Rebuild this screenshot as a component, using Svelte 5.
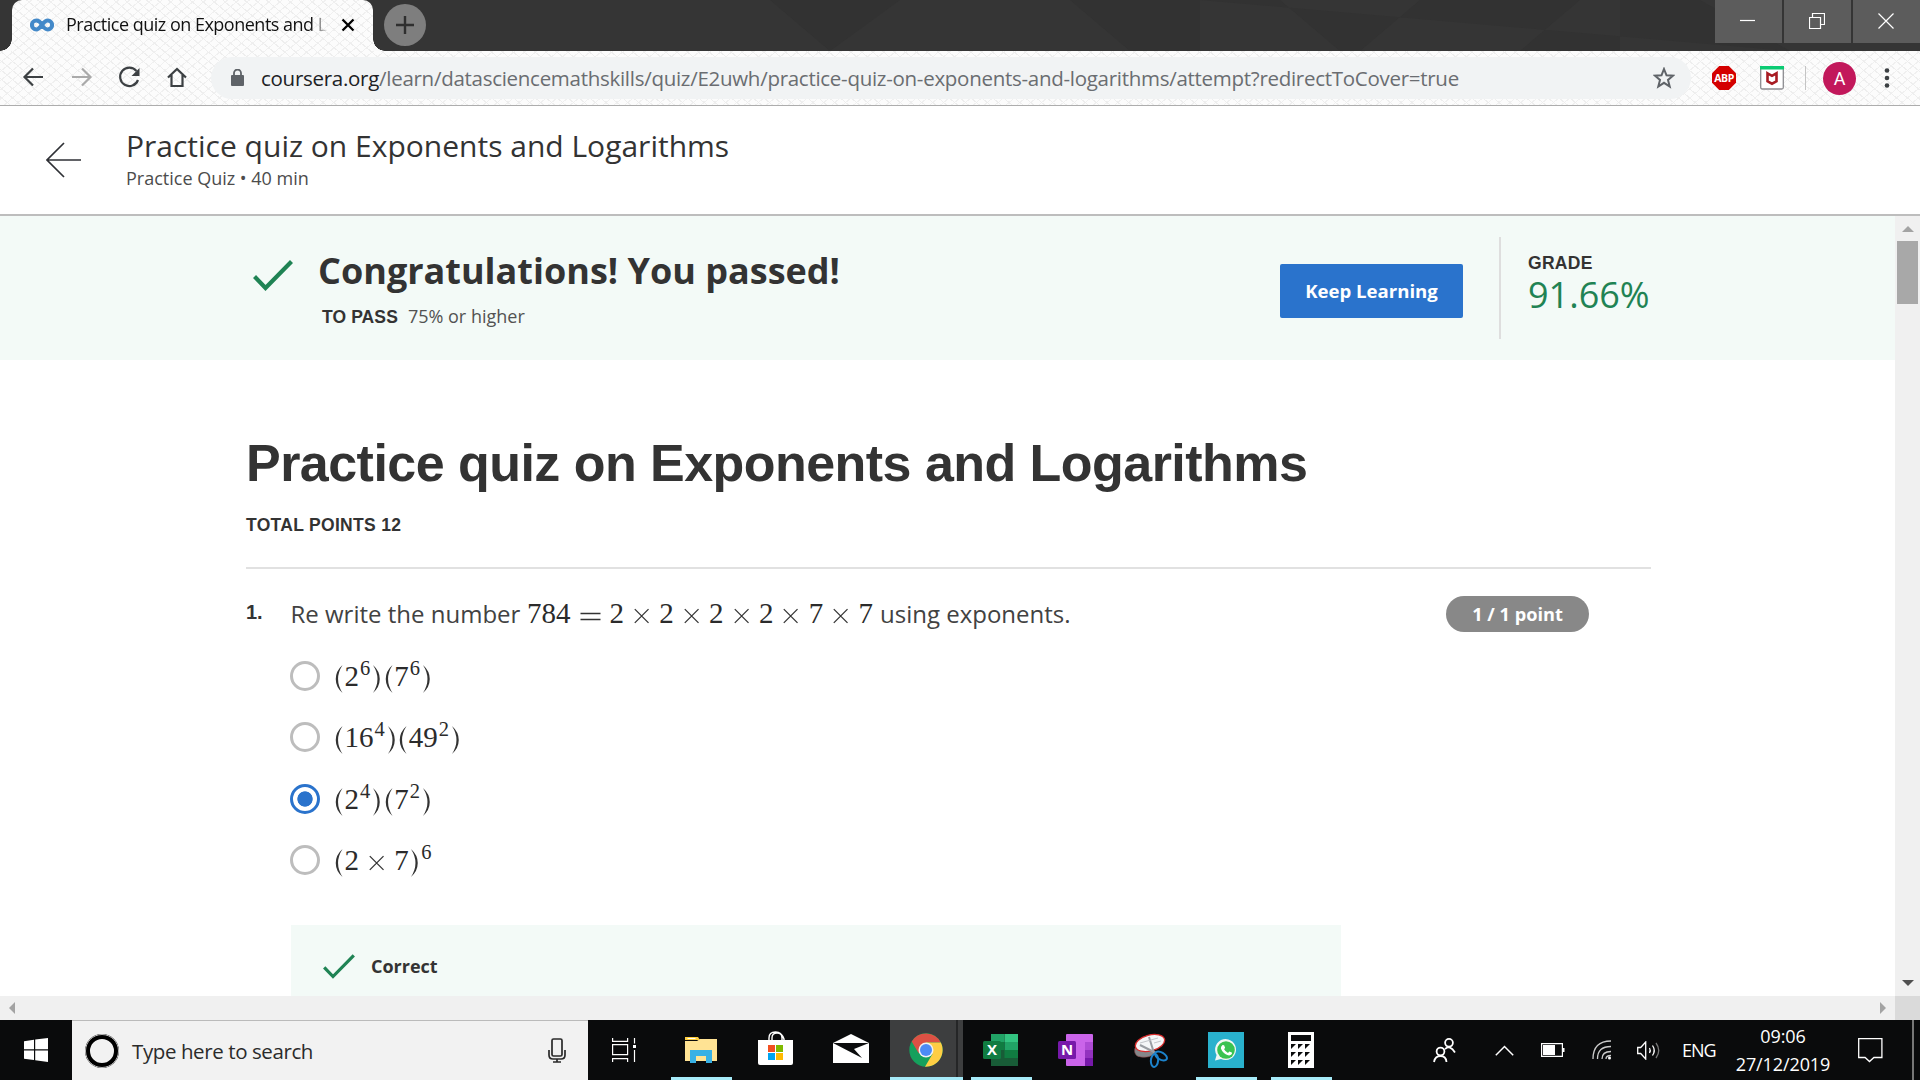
<script>
  const options = [
    { parts: [['(', 'p'], ['2'], ['6', 's'], [')', 'p'], ['(', 'p'], ['7'], ['6', 's'], [')', 'p']], checked: false },
    { parts: [['(', 'p'], ['1'], ['6'], ['4', 's'], [')', 'p'], ['(', 'p'], ['4'], ['9'], ['2', 's'], [')', 'p']], checked: false },
    { parts: [['(', 'p'], ['2'], ['4', 's'], [')', 'p'], ['(', 'p'], ['7'], ['2', 's'], [')', 'p']], checked: true },
    { parts: [['(', 'p'], ['2'], ['×', 'o'], ['7'], [')', 'p'], ['6', 's']], checked: false },
  ];
  const equation = [['7'], ['8'], ['4'], ['=', 'e'], ['2'], ['×', 'o'], ['2'], ['×', 'o'], ['2'], ['×', 'o'], ['2'], ['×', 'o'], ['7'], ['×', 'o'], ['7']];
</script>

{#snippet math(parts)}
  <span class="math">{#each parts as [ch, kind]}{#if kind === 'o'}<svg class="op times" viewBox="0 0 36 20"><path d="M11 3l14 14M25 3L11 17" /></svg>{:else if kind === 'e'}<svg class="op equals" viewBox="0 0 39 20"><path d="M9.500 7.500h20M9.500 13.500h20" /></svg>{:else if kind === 'p'}<svg class="paren" class:close={ch === ')'} viewBox="0 0 11 30"><path d="M9.300 1Q2.500 7 2.500 15T9.300 29Q4.800 22 4.800 15T9.300 1Z" /></svg>{:else}<span class="digit" class:sup={kind === 's'}>{ch}</span>{/if}{/each}</span>
{/snippet}

<div class="screen">
  <div class="tabstrip">
    <svg class="facets" width="1920" height="51"><path d="M770 0h130l-70 51zM1070 0l60 51h70V0zM1200 0h80l60 51h20l60-51h160l-60 51h100V0h80l90 51" fill="#323232" /></svg>
    <div class="tab">
      <svg width="24" height="14" viewBox="0 0 24 14"><path d="M12 7C10 3.500 8 2.600 6.300 2.600a4.400 4.400 0 0 0 0 8.800C10.500 11.400 13 2.600 17.700 2.600a4.400 4.400 0 0 1 0 8.800C15.500 11.400 14 10 12 7" fill="none" stroke="#4389c9" stroke-width="4" /></svg>
      <span class="tab-title">Practice quiz on Exponents and L</span>
      <svg class="tab-close" width="14" height="14" viewBox="0 0 14 14"><path d="M1.500 1.500l11 11M12.500 1.500l-11 11" stroke="#000" stroke-width="2.300" /></svg>
    </div>
    <div class="newtab"><svg width="18" height="18" viewBox="0 0 18 18"><path d="M9 0v18M0 9h18" stroke="#2f2f2f" stroke-width="2.400" /></svg></div>
    <div class="window-buttons">
      <div><svg width="16" height="16"><path d="M0 7.500h15" /></svg></div>
      <div><svg width="16" height="16"><path d="M.5 4.500h11v11H.5zM3.500 4V.5h12v11h-4" /></svg></div>
      <div><svg width="16" height="16"><path d="M.5.5l15 15M15.500.5l-15 15" /></svg></div>
    </div>
  </div>

  <div class="toolbar">
    <svg class="nav" width="192" height="54" viewBox="0 0 192 54" fill="none" stroke="#3c4043" stroke-width="2.200">
      <path d="M43 26H25M33 17.500L24.500 26l8.500 8.500" />
      <path d="M72 26h18M82 17.500l8.500 8.500-8.500 8.500" stroke="#aaa" />
      <path d="M136.500 20A9.200 9.200 0 1 0 138 29" /><path d="M139.500 17v8h-8z" fill="#3c4043" stroke="none" />
      <path d="M168 26.500l9-8.500 9 8.500M171.500 24v11h11V24" />
    </svg>
    <div class="address">
      <svg width="14" height="18" viewBox="0 0 14 18"><rect x="0" y="6" width="13" height="11" rx="1" fill="#5f6368" /><path d="M3 7V4a3.500 3.500 0 0 1 7 0v3" fill="none" stroke="#5f6368" stroke-width="1.800" /></svg>
      <div class="url"><b>coursera.org</b>/learn/datasciencemathskills/quiz/E2uwh/practice-quiz-on-exponents-and-logarithms/attempt?redirectToCover=true</div>
      <svg class="star" width="22" height="22" viewBox="0 0 22 22"><path d="M11 2l2.500 6.300 6.500.4-5 4.200 1.700 6.600L11 15.800l-5.700 3.700L7 12.900 2 8.700l6.500-.4z" fill="none" stroke="#5f6368" stroke-width="2" /></svg>
    </div>
    <div class="abp">ABP</div>
    <svg class="shield" width="24" height="24" viewBox="0 0 24 24"><rect x=".7" y="1" width="22.600" height="22" rx="1.500" fill="#fff" stroke="#8c8c90" stroke-width="1.300" /><path d="M0 0h24v3.500H0z" fill="#0bcb73" /><path d="M7.500 7.300l4.500 2.500 4.500-2.500v8l-4.500 2.400-4.500-2.400z" fill="none" stroke="#a81b22" stroke-width="2.600" /></svg>
    <div class="bar"></div>
    <div class="avatar">A</div>
    <svg class="menu" width="6" height="20" viewBox="0 0 6 20" fill="#3c4043"><circle cx="3" cy="2.500" r="2.300" /><circle cx="3" cy="10" r="2.300" /><circle cx="3" cy="17.500" r="2.300" /></svg>
  </div>

  <header>
    <svg width="35" height="36" viewBox="0 0 35 36"><path d="M35 18H1M18 1L1 18l17 17" fill="none" stroke="#2f3136" stroke-width="1.700" /></svg>
    <div class="heading">
      <div class="course-title">Practice quiz on Exponents and Logarithms</div>
      <div class="course-sub">Practice Quiz • 40 min</div>
    </div>
  </header>

  <div class="viewport">
    <main>
      <section class="result">
        <svg class="pass-check" width="40" height="31" viewBox="0 0 40 31"><path d="M1.500 16.500l11 11.500L38.500 1.500" fill="none" stroke="#1f8354" stroke-width="4.200" /></svg>
        <div class="congrats">
          <h2>Congratulations! You passed!</h2>
          <div class="to-pass"><b>TO PASS</b><span>75% or higher</span></div>
        </div>
        <button>Keep Learning</button>
        <div class="grade"><b>GRADE</b><span>91.66%</span></div>
      </section>
      <article>
        <h1>Practice quiz on Exponents and Logarithms</h1>
        <div class="total">TOTAL POINTS 12</div>
        <div class="question">
          <span class="number">1.</span>
          <div class="prompt"><span class="pre">Re write the number</span>{@render math(equation)}<span class="post">using exponents.</span></div>
          <span class="points">1 / 1 point</span>
        </div>
        <div class="options">
          {#each options as option}
            <div class="option"><i class="radio" class:checked={option.checked}></i>{@render math(option.parts)}</div>
          {/each}
        </div>
        <div class="feedback">
          <svg width="32" height="25" viewBox="0 0 40 31"><path d="M1.500 16.500l11 11.500L38.500 1.500" fill="none" stroke="#1f8354" stroke-width="4" /></svg>
          <b>Correct</b>
        </div>
      </article>
    </main>
    <div class="scroll-y">
      <svg width="12" height="6"><path d="M6 0l6 6H0z" fill="#a3a3a3" /></svg>
      <i></i>
      <svg class="down" width="12" height="6"><path d="M0 0h12L6 6z" fill="#505050" /></svg>
    </div>
  </div>
  <div class="scroll-x">
    <svg width="6" height="12"><path d="M6 0v12L0 6z" fill="#a3a3a3" /></svg>
    <svg class="right" width="6" height="12"><path d="M0 0l6 6-6 6z" fill="#a3a3a3" /></svg>
    <i></i>
  </div>

  <footer>
    <div class="start"><svg width="24" height="24" viewBox="0 0 24 24" fill="#fff"><path d="M0 3.300l10-1.500v9.500H0zM11.200 1.600L24 0v11.300H11.200zM0 12.500h10V22L0 20.700zM11.200 12.500H24V24l-12.800-1.800z" /></svg></div>
    <div class="search">
      <i class="cortana"></i>
      <span>Type here to search</span>
      <svg width="18" height="25" viewBox="0 0 18 25" fill="none" stroke="#2b2b2b" stroke-width="1.700"><rect x="4" y="1" width="10" height="17" rx="1.500" /><path d="M1 12v5q0 4 4 4h8q4 0 4-4v-5M9 21v3M5 24h8" /></svg>
    </div>
    <div class="apps">
      <div class="app"><svg class="views" width="24" height="24" viewBox="0 0 24 24" fill="none" stroke="#fff" stroke-width="1.200"><path d="M.6 0v3.400h15V0M.6 6.600h15v10h-15zM.6 24v-3.400h15V24M22.500 0v5.500M22.500 12v12" /><path d="M21 7h3v3h-3z" fill="#fff" stroke="none" /></svg></div>
      <div class="app open"><svg width="32" height="28" viewBox="0 0 32 28"><path d="M0 1h13l2 3H0z" fill="#ffcf3f" /><path d="M0 5h12l3-2h17v22H0z" fill="#ffe394" /><path d="M2.500 2.500h8" stroke="#fff" /><path d="M5 27V14h22v13h-6v-7H11v7z" fill="#38b1e5" /></svg></div>
      <div class="app"><svg class="store" width="35" height="34" viewBox="0 0 35 34"><path d="M11 11V7q0-6 6.500-6T24 7v4M14 10V7q0-5 5-5t7 6v3" fill="none" stroke="#fff" stroke-width="1.400" /><path d="M0 9h35v23q0 2-2 2H2q-2 0-2-2z" fill="#fff" /><path d="M10 14h7v7h-7z" fill="#f25022" /><path d="M18 14h7v7h-7z" fill="#7fba00" /><path d="M10 22h7v7h-7z" fill="#00a4ef" /><path d="M18 22h7v7h-7z" fill="#ffb900" /></svg></div>
      <div class="app"><svg class="mail" width="36" height="29" viewBox="0 0 36 29"><path d="M0 9L18 0l18 9v20H0z" fill="#fff" /><path d="M0 9h36l-15 6 8 9L0 9z" fill="#0b0c0d" /></svg></div>
      <div class="app open active"><svg width="34" height="34" viewBox="0 0 34 34"><circle cx="17" cy="17" r="16.700" fill="#15a05c" /><path d="M2.700 8.500A16.700 16.700 0 0 1 31.800 9.500H17L9.500 20z" fill="#dd5144" /><path d="M17 9.500h14.800A16.700 16.700 0 0 1 16 33.700L23.500 21z" fill="#ffce44" /><circle cx="17" cy="17" r="7.500" fill="#f1f1f1" /><circle cx="17" cy="17" r="6" fill="#4c8bf5" /></svg></div>
      <div class="app open"><svg width="35" height="32" viewBox="0 0 35 32"><path d="M8 0h13.500v8H8z" fill="#21a366" /><path d="M21.500 0H35v8H21.500z" fill="#33c481" /><path d="M8 8h13.500v8H8z" fill="#107c41" /><path d="M21.500 8H35v8H21.500z" fill="#21a366" /><path d="M8 16h27v16H8z" fill="#185c37" /><path d="M21.500 16H35v8H21.500z" fill="#107c41" /><rect y="7" width="18" height="18" rx="1.500" fill="#107c41" /><text x="9" y="21" text-anchor="middle">X</text></svg></div>
      <div class="app"><svg width="35" height="32" viewBox="0 0 35 32"><rect x="8" width="27" height="32" rx="1" fill="#ca64ea" /><path d="M27 8h8v8h-8z" fill="#ae4bd5" /><path d="M27 16h8v8h-8z" fill="#9332bf" /><path d="M27 24h8v8h-8z" fill="#7719aa" /><rect y="7" width="18" height="18" rx="1.500" fill="#7719aa" /><text x="9" y="21" text-anchor="middle">N</text></svg></div>
      <div class="app"><svg width="34" height="35" viewBox="0 0 34 35"><path d="M1 15q-2 8 6 9 8 1 13-3v-8z" fill="#85878a" stroke="#8f4a4a" stroke-width=".6" /><ellipse cx="16" cy="10" rx="15" ry="8" transform="rotate(-15 16 10)" fill="#f5f6f8" stroke="#d82c2c" stroke-width="1.300" /><path d="M15 4l5 16M6 12l16 8" stroke="#9a9da3" stroke-width="2" fill="none" /><path d="M6 10l18-5M20 10l7-2" stroke="#c3c5ca" fill="none" /><g fill="none" stroke="#1c83cc" stroke-width="2"><ellipse cx="20.500" cy="27.500" rx="3.600" ry="6.500" transform="rotate(5 20.500 27.500)" /><ellipse cx="27" cy="23" rx="6.500" ry="3.600" transform="rotate(30 27 23)" /></g></svg></div>
      <div class="app open"><svg width="36" height="36" viewBox="0 0 36 36"><path d="M0 0h36v36H0z" fill="#29b1cd" /><path d="M7 28.500l1.600-5.500A10.500 10.500 0 1 1 13 27z" fill="#f2f7f3" /><circle cx="18" cy="18" r="8.800" fill="#3ac351" /><path d="M14.500 13l1.600.2 1 2.600-1 1.500q1.300 2.500 3.900 3.600l1.300-1.500 2.600 1.200v1.400q-1.800 2.200-4.600 1.100-4.500-1.700-6.400-6.600-.3-2 1.600-3.500z" fill="#fff" /></svg></div>
      <div class="app open"><svg width="26" height="36" viewBox="0 0 26 36"><path d="M0 0h26v36H0z" fill="#fff" /><path d="M3 3h20v6H3z" fill="#0b0c0d" />{#each [12, 20, 28] as y}{#each [3, 10, 17] as x}<path d="M{x} {y}h5l-5 5z" fill="#0b0c0d" />{/each}{/each}</svg></div>
    </div>
    <div class="tray">
      <svg class="people" width="24" height="25" viewBox="0 0 24 25" fill="none" stroke="#fff" stroke-width="1.800"><circle cx="16" cy="4.800" r="3.900" /><path d="M12 11q5-4.500 10 3.500" /><circle cx="7.500" cy="13.500" r="3.900" /><path d="M1 24q1-6 6.500-6t6 6" /></svg>
      <svg class="caret" width="19" height="11" viewBox="0 0 19 11" fill="none" stroke="#fff" stroke-width="1.500"><path d="M.8 10.200L9.500 1.500l8.700 8.700" /></svg>
      <svg class="battery" width="24" height="14" viewBox="0 0 24 14"><path d="M.6.6h20.800v12.800H.6z" fill="none" stroke="#fff" stroke-width="1.200" /><path d="M2 2h12v10H2zM22 5h1.500v4H22z" fill="#fff" /></svg>
      <svg class="wifi" width="20" height="20" viewBox="0 0 20 20" fill="none" stroke="#ccc" stroke-width="1.300"><path d="M1 19Q1 1 19 1M5.500 19Q5.500 6.500 19 6.500M10 19q0-7.500 9-7.500M14 19q0-3.500 5-3.500" /><circle cx="17.500" cy="18" r="1.500" fill="#fff" stroke="none" /></svg>
      <svg class="sound" width="23" height="19" viewBox="0 0 23 19" fill="none" stroke="#fff" stroke-width="1.300"><path d="M.7 6.500h3l5-5.500v17l-5-5.500h-3z" /><path d="M12.500 7q1.500 2.500 0 5M15.500 4.500q3.500 5 0 10" /><path d="M19 2q5.500 7.500 0 15" stroke="#777" /></svg>
      <span class="lang">ENG</span>
      <div class="clock"><span>09:06</span><span>27/12/2019</span></div>
      <svg class="notes" width="25" height="25" viewBox="0 0 25 25" fill="none" stroke="#fff" stroke-width="1.300"><path d="M.7.700h23.200v18.800h-8l-4.400 4-4.400-4H.7z" /></svg>
      <i class="peek"></i>
    </div>
  </footer>
</div>

<style>
  :global(body) { margin: 0; overflow: hidden; }
  .screen, .screen * { box-sizing: border-box; }
  .screen { width: 1920px; height: 1080px; display: flex; flex-direction: column; background: #fff; color: #333; font-family: "Open Sans", sans-serif; white-space: nowrap; overflow: hidden; }
  svg { display: block; flex: none; }
  .tabstrip, .toolbar { background-color: #fcfcfc; background-image: repeating-linear-gradient(40deg, transparent 0 6px, #eeeeee 6px 7px), repeating-linear-gradient(-40deg, transparent 0 6px, #f0f0f0 6px 7px); }
  .tabstrip { position: relative; height: 51px; display: flex; background: #353535; padding-left: 12px; flex: none; }
  .facets { position: absolute; left: 0; top: 0; }
  .tab { position: relative; width: 361px; height: 51px; border-radius: 10px 10px 0 0; display: flex; align-items: center; padding: 0 18px 1px; background: repeating-linear-gradient(40deg, transparent 0 6px, #eeeeee 6px 7px), repeating-linear-gradient(-40deg, transparent 0 6px, #f0f0f0 6px 7px), #fcfcfc; }
  .tab::before, .tab::after { content: ""; position: absolute; bottom: 0; width: 12px; height: 12px; }
  .tab::before { left: -12px; background: radial-gradient(circle at 0 0, transparent 11.500px, #fafafa 12px); }
  .tab::after { right: -12px; background: radial-gradient(circle at 100% 0, transparent 11.500px, #fafafa 12px); }
  .tab-title { width: 262px; margin-left: 12px; padding-bottom: 2px; overflow: hidden; color: #111; font: 18px "Open Sans", sans-serif; letter-spacing: -.5px; -webkit-mask-image: linear-gradient(90deg, #000 245px, transparent 262px); }
  .tab-close { margin-left: 13px; }
  .newtab { position: relative; width: 42px; height: 42px; margin: 4px 0 0 11px; border-radius: 50%; background: #7e7e7e; display: grid; place-items: center; }
  .window-buttons { position: relative; margin-left: auto; display: flex; gap: 2px; height: 43px; }
  .window-buttons div { width: 67px; background: #5c5c5c; display: grid; place-items: center; padding: 0 2px 1px 0; }
  .window-buttons path { fill: none; stroke: #fff; stroke-width: 1.200; }
  .toolbar { height: 55px; flex: none; display: flex; align-items: center; border-bottom: 1px solid #adadad; }
  .address { margin-left: 19px; width: 1480px; height: 42px; border-radius: 21px; background: #f1f3f4; display: flex; align-items: center; padding-left: 20px; }
  .url { margin-left: 16px; padding-bottom: 1px; width: 1204px; font-size: 20.500px; letter-spacing: -.28px; color: #6a6d71; }
  .url b { font-weight: 400; color: #202124; }
  .star { margin-left: 188px; }
  .abp { margin-left: 21px; width: 24px; height: 24px; background: #d40000; clip-path: polygon(30% 0, 70% 0, 100% 30%, 100% 70%, 70% 100%, 30% 100%, 0 70%, 0 30%); color: #fff; font: bold 10.500px/24px "Open Sans", sans-serif; letter-spacing: -.4px; text-align: center; }
  .shield { margin-left: 24px; }
  .bar { width: 1px; height: 24px; margin-left: 21px; background: #c4c4c4; }
  .avatar { width: 33px; height: 33px; margin-left: 17px; border-radius: 50%; background: #c2185b; color: #fff; font: 18px/33px Roboto, sans-serif; text-align: center; }
  .menu { margin-left: 28px; }
  header { height: 110px; flex: none; display: flex; border-bottom: 2px solid #bdbdbd; padding: 36px 0 0 46px; }
  .heading { margin: -17px 0 0 45px; }
  .course-title { font-size: 30px; line-height: 41px; }
  .course-sub { font-size: 18px; line-height: 24px; color: #4c4c4c; }
  .viewport { height: 780px; flex: none; display: flex; }
  main { width: 1895px; overflow: hidden; }
  .result { height: 144px; background: #f3faf7; display: flex; padding-left: 253px; }
  .pass-check { margin-top: 44px; }
  .congrats { margin: 31px 0 0 25px; width: 962px; }
  h2 { margin: 0; font-size: 36px; line-height: 48px; }
  .to-pass { display: flex; gap: 10px; margin: 9px 0 0 4px; font-size: 18px; line-height: 24px; color: #525252; }
  .to-pass b, .grade b, .total { font: bold 17.500px/24px "Liberation Sans", sans-serif; color: #333; letter-spacing: .3px; }
  .to-pass b { line-height: 26px; letter-spacing: .1px; }
  button { margin-top: 48px; width: 183px; height: 54px; padding: 0 0 2px; border: 0; border-radius: 2px; background: #2a73cc; color: #fff; font: bold 18.600px "Open Sans", sans-serif; }
  .grade { height: 102px; margin: 21px 0 0 36px; border-left: 2px solid #dedede; padding: 14px 0 0 27px; display: flex; flex-direction: column; }
  .grade span { font-size: 36px; line-height: 40px; color: #1f8354; }
  article { padding: 75px 0 0 246px; width: 1651px; }
  h1 { margin: 0; font: bold 52px/56px "Liberation Sans", sans-serif; letter-spacing: -.54px; }
  .total { margin-top: 22px; height: 56px; border-bottom: 2px solid #e1e1e1; }
  .question { display: flex; margin-top: 27px; height: 38px; }
  .number { width: 44.500px; font: bold 20px/32px "Liberation Sans", sans-serif; }
  .prompt { width: 1155.500px; display: flex; align-items: baseline; font-size: 24px; line-height: 38px; color: #424242; margin-top: -2px; }
  .pre { width: 236.500px; }
  .post { margin-left: 7px; }
  .math { display: inline-flex; align-items: baseline; font: 29px/38px "Liberation Serif", serif; color: #2b2b2b; }
  .digit { width: 14.500px; text-align: center; }
  .sup { width: 12.200px; font-size: 20.500px; position: relative; top: -11px; }
  .op { width: 35.300px; height: 20px; position: relative; top: 3px; fill: none; stroke: #333; stroke-width: 1.300; }
  .equals { width: 39px; }
  .paren { width: 11.500px; height: 30px; position: relative; top: 8px; fill: #333; }
  .close { transform: scaleX(-1); }
  .points { width: 143px; height: 36px; border-radius: 18px; background: #888; color: #fff; font-size: 18.200px; line-height: 36px; font-weight: 700; text-align: center; }
  .options { padding: 11px 0 0 43.500px; }
  .option { display: flex; align-items: center; gap: 13.500px; height: 61.500px; }
  .option :global(.math) { padding-top: 2px; }
  .radio { width: 30px; height: 30px; border: 3px solid #bdbdbd; border-radius: 50%; }
  .radio.checked { border-color: #2a73cc; background: radial-gradient(circle, #2a73cc 7.300px, #fff 8px); }
  .feedback { margin: 34px 0 0 45px; width: 1050px; height: 100px; background: #f3faf7; display: flex; padding: 29px 0 0 32px; font-size: 18px; line-height: 24px; }
  .feedback b { margin-left: 16px; font-weight: 700; }
  .scroll-y { width: 25px; background: #f0f0f0; display: flex; flex-direction: column; align-items: center; padding: 10px 0; }
  .scroll-y i { width: 21px; height: 63px; margin-top: 9px; background: #a8a8a8; }
  .down { margin-top: auto; }
  .scroll-x { height: 24px; flex: none; background: #f0f0f0; display: flex; align-items: center; padding-left: 9px; }
  .right { margin-left: auto; }
  .scroll-x i { width: 25px; height: 24px; margin-left: 9px; background: #dadada; }
  footer { height: 60px; flex: none; display: flex; background: #0a0b0c; color: #fff; }
  .start { width: 72px; display: grid; place-items: center; }
  .search { width: 516px; background: #f2f2f2; border-top: 1px solid #bbb; display: flex; align-items: center; padding-left: 13px; color: #2b2b2b; font-size: 20.500px; }
  .search span { margin-left: 13px; width: 416px; letter-spacing: -.4px; }
  .cortana { width: 34px; height: 34px; border: 5px solid #000; border-radius: 50%; outline: 1px solid #bbb; outline-offset: -1px; }
  .apps { display: flex; margin-left: 1px; }
  .app { width: 75px; height: 60px; display: grid; place-items: center; position: relative; }
  .app > svg { margin-left: -2px; }
  .app > .views { margin-left: -5px; }
  .store { margin-top: -5px; }
  .mail { margin-top: -3px; }
  .app text { fill: #fff; font: bold 15px "Open Sans", sans-serif; }
  .open::after { content: ""; position: absolute; bottom: 0; left: 7px; width: 61px; height: 3px; background: #a6ebf9; }
  .active { background: linear-gradient(90deg, transparent 1px, #3d3e3f 1px 67px, #252627 67px 69px, #3d3e3f 69px 74px, transparent 74px); }
  .active::after { left: 1px; width: 73px; }
  .tray { flex: 1; display: flex; align-items: center; font-size: 18px; padding-left: 94px; }
  .caret { margin-left: 38px; }
  .battery { margin-left: 27px; }
  .wifi { margin-left: 27px; }
  .sound { margin-left: 25px; }
  .lang { width: 35px; margin-left: 22px; letter-spacing: -1px; }
  .clock { width: 100px; margin-left: 16px; display: flex; flex-direction: column; text-align: center; line-height: 28px; letter-spacing: -.1px; }
  .notes { margin-left: 25px; }
  .peek { width: 2px; height: 60px; margin-left: 29px; background: #777; }
</style>
